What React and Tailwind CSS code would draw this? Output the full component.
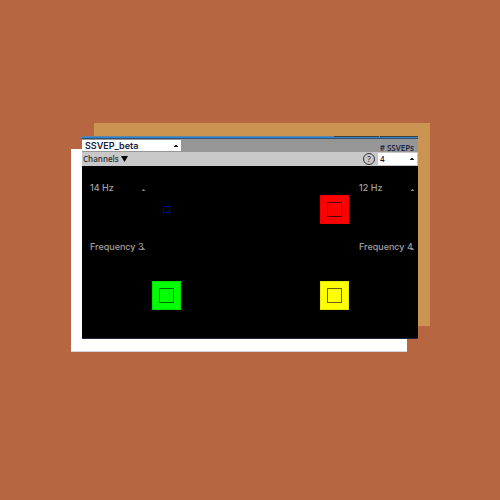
import React from "react";

function Caret({ className = "w-[4px]" }) {
  return (
    <svg viewBox="0 0 4 2" aria-hidden="true" className={`pointer-events-none h-[2px] shrink-0 ${className}`}>
      <path d="M0 2V1h1V0h2v1h1v1z" fill="currentColor" />
    </svg>
  );
}

function FrequencySelect({ label, value }) {
  return (
    <label className="flex h-3 w-[56px] items-center text-[#a0a0a0]">
      <select
        aria-label={label}
        defaultValue={value}
        className="h-3 w-[56px] shrink-0 appearance-none bg-transparent p-0 text-[9px] leading-3 font-medium outline-none"
      >
        <option>{value}</option>
      </select>
      <Caret className="-ml-1 mt-1 w-[3px]" />
    </label>
  );
}

function Stimulus({ label, tone, ring }) {
  return (
    <div className="flex flex-1 items-center justify-center">
      <button aria-label={label} className={`flex size-[29px] items-center justify-center border ${tone}`}>
        <span className={`size-[15px] border ${ring}`} />
      </button>
    </div>
  );
}

function Half({ labels, children, inset }) {
  return (
    <div className="grid">
      <div className={`z-10 col-start-1 row-start-1 flex flex-col gap-[47px] self-start pt-4 ${inset}`}>
        {labels.map(({ name, value }) => (
          <FrequencySelect key={name} value={value} label={name} />
        ))}
      </div>
      <div className="col-start-1 row-start-1 flex flex-col">{children}</div>
    </div>
  );
}

export default function App() {
  return (
    <main className="min-h-screen bg-[#b66640] px-[82px] pt-[136px] font-['Open_Sans',sans-serif]">
      <div className="relative isolate">
        <div className="absolute -top-[13px] -right-3 bottom-[13px] left-3 -z-10 bg-[#cb9451]" />
        <div className="absolute top-[13px] right-[11px] -bottom-[13px] -left-[11px] -z-10 border-b border-[#d4d4dc] bg-white" />

        <section className="border-b border-[#202838] bg-black">
          <div className="flex h-[3px] flex-col">
            <div className="flex h-px justify-end gap-px bg-[#5c88a8]">
              <span className="w-[45px] bg-[#453f36]" />
              <span className="w-[38px] bg-[#453f36]" />
            </div>
            <div className="h-px bg-[#3182ce]" />
            <div className="h-px bg-[#34516f]" />
          </div>

          <header className="flex h-[13px] items-center justify-between bg-[#969696] text-[#16213f]">
            <div className="flex h-[11px] w-[99px] items-center bg-white pr-[3px]">
              <select
                aria-label="Widget"
                defaultValue="SSVEP_beta"
                className="h-[11px] min-w-0 flex-1 appearance-none pl-[3px] font-['Inter',sans-serif] text-[9px] leading-[11px] font-semibold outline-none"
              >
                <option>SSVEP_beta</option>
              </select>
              <Caret />
            </div>
            <label htmlFor="count" className="pt-[3px] pr-1 text-[8px] leading-[9px] font-semibold">
              # SSVEPs
            </label>
          </header>

          <div className="flex h-[14px] items-center bg-[#c8c8c8]">
            <button className="flex items-center gap-[2px] pl-px text-[8px] leading-3 font-semibold text-[#333]">
              Channels
              <svg viewBox="0 0 7 6" aria-hidden="true" className="h-[6px] w-[7px]">
                <path d="M0 0h7L3.500 6z" fill="#000" />
              </svg>
            </button>
            <button
              aria-label="Help"
              className="mr-[3px] ml-auto flex size-3 items-center justify-center rounded-full border border-[#333] text-[8px] leading-none font-semibold text-[#333]"
            >
              ?
            </button>
            <div className="mr-px flex h-3 w-[39px] items-center bg-white pr-[3px] text-[#16213f]">
              <select
                id="count"
                defaultValue="4"
                className="h-3 min-w-0 flex-1 appearance-none pl-[2px] text-[8px] leading-3 font-semibold outline-none"
              >
                <option>4</option>
              </select>
              <Caret />
            </div>
          </div>

          <div className="grid h-[172px] grid-cols-2 font-['Inter',sans-serif]">
            <Half
              labels={[
                { name: "Frequency 1", value: "14 Hz" },
                { name: "Frequency 3", value: "Frequency 3" },
              ]}
              inset="pl-2"
            >
              <div className="flex flex-1 items-center justify-center">
                <button aria-label="Stimulus 1" className="size-[7px] border border-[#0000a8]" />
              </div>
              <Stimulus label="Stimulus 3" tone="bg-[#00ff00] border-[#00e000]" ring="border-[#006400]" />
            </Half>
            <Half
              labels={[
                { name: "Frequency 2", value: "12 Hz" },
                { name: "Frequency 4", value: "Frequency 4" },
              ]}
              inset="pl-[109px]"
            >
              <Stimulus label="Stimulus 2" tone="bg-[#ff0000] border-[#f00000]" ring="border-[#500000]" />
              <Stimulus label="Stimulus 4" tone="bg-[#ffff00] border-[#e8e800]" ring="border-[#646400]" />
            </Half>
          </div>
        </section>
      </div>
    </main>
  );
}
